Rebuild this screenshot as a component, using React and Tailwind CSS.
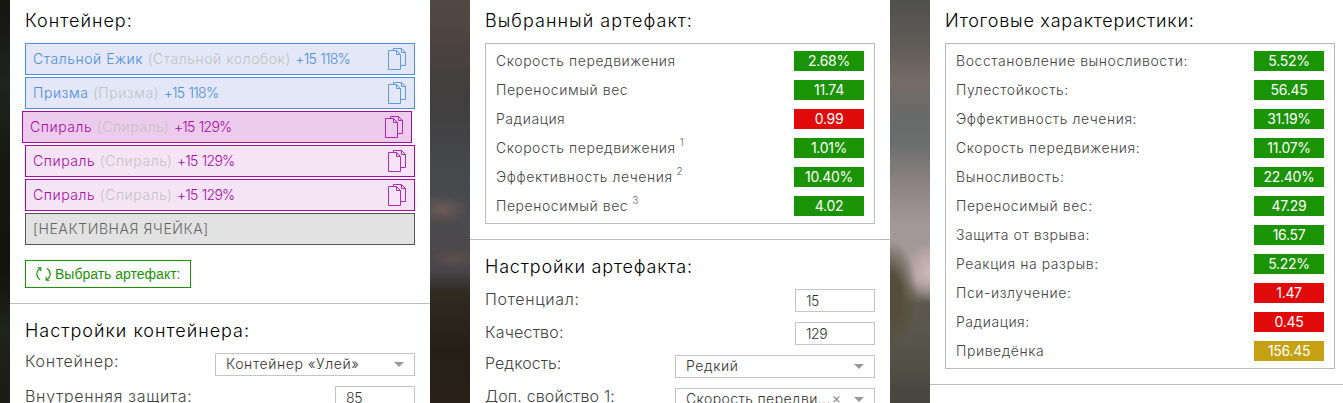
import React from "react"

const SLOTS = [
  { name: "Стальной Ежик", base: "(Стальной колобок)", stats: "+15 118%", kind: "blue" },
  { name: "Призма", base: "(Призма)", stats: "+15 118%", kind: "blue" },
  { name: "Спираль", base: "(Спираль)", stats: "+15 129%", kind: "purple", selected: true },
  { name: "Спираль", base: "(Спираль)", stats: "+15 129%", kind: "purple" },
  { name: "Спираль", base: "(Спираль)", stats: "+15 129%", kind: "purple" },
]

const ARTIFACT_STATS = [
  { label: "Скорость передвижения", value: "2.68%", tone: "good" },
  { label: "Переносимый вес", value: "11.74", tone: "good" },
  { label: "Радиация", value: "0.99", tone: "bad" },
  { label: "Скорость передвижения", note: "1", value: "1.01%", tone: "good" },
  { label: "Эффективность лечения", note: "2", value: "10.40%", tone: "good" },
  { label: "Переносимый вес", note: "3", value: "4.02", tone: "good" },
]

const TOTAL_STATS = [
  { label: "Восстановление выносливости:", value: "5.52%", tone: "good" },
  { label: "Пулестойкость:", value: "56.45", tone: "good" },
  { label: "Эффективность лечения:", value: "31.19%", tone: "good" },
  { label: "Скорость передвижения:", value: "11.07%", tone: "good" },
  { label: "Выносливость:", value: "22.40%", tone: "good" },
  { label: "Переносимый вес:", value: "47.29", tone: "good" },
  { label: "Защита от взрыва:", value: "16.57", tone: "good" },
  { label: "Реакция на разрыв:", value: "5.22%", tone: "good" },
  { label: "Пси-излучение:", value: "1.47", tone: "bad" },
  { label: "Радиация:", value: "0.45", tone: "bad" },
  { label: "Приведёнка", value: "156.45", tone: "total" },
]

const TONES = {
  good: "bg-[#1a9305]",
  bad: "bg-[#e00a0a]",
  total: "bg-[#c4a012]",
}

function CopyIcon() {
  return (
    <svg className="h-[22px] w-[18px] shrink-0 opacity-85" viewBox="0 0 18 22" fill="none" stroke="currentColor">
      <path d="M.5 2.5h8l4 4v15H.5z M8.5 2.5v4h4" />
      <path d="M5.5 2.500V.5h8l4 4v13h-5 M13.5 .5v4h4" />
    </svg>
  )
}

function RefreshIcon() {
  return (
    <svg className="w-[15px] h-[14px] shrink-0" viewBox="0 0 15 14" fill="none" stroke="currentColor" strokeWidth="1.1">
      <path d="M4.500 1.300C-.3 4-.3 9.500 4 12.800 M1.500 .8h3.300v3.400" />
      <path d="M10.500 12.700C15.300 10 15.300 4.500 11 1.200 M13.500 13.200h-3.300V9.800" />
    </svg>
  )
}

function Slot({ slot }) {
  const color = slot.kind === "blue" ? "border-[#4a90e2] text-[#4a8fe0]" : "border-[#a80aa8] text-[#a80aa8]"
  const fill = slot.kind === "blue" ? "bg-[#e3e7f7]" : slot.selected ? "bg-[#edcbec]" : "bg-[#f5e4f6]"

  return (
    <div
      className={`flex h-8 items-center justify-between border pl-[7px] pr-2 text-[14px] ${color} ${fill} ${
        slot.selected ? "-ml-[3px] mr-[3px]" : ""
      }`}
    >
      <span className="whitespace-nowrap pb-0.5 font-[350] tracking-[0.55px]">
        {slot.name} <span className="text-[#c3c3c3]">{slot.base}</span>{" "}
        <span className="tracking-[-0.75px] [word-spacing:1px]">{slot.stats}</span>
      </span>
      <CopyIcon />
    </div>
  )
}

function StatRow({ stat }) {
  return (
    <div className="flex h-5 items-center justify-between">
      <span className="whitespace-nowrap text-[14px] font-light leading-5 tracking-[0.56px] text-[#444]">
        {stat.label}
        {stat.note && <sup className="-top-[7px] ml-1 text-[10px] leading-none text-[#666]">{stat.note}</sup>}
      </span>
      <span
        className={`h-5 w-[70px] text-center text-[14px] font-normal leading-5 tracking-[-0.3px] text-white ${TONES[stat.tone]}`}
      >
        {stat.value}
      </span>
    </div>
  )
}

function StatBox({ stats }) {
  return (
    <div className="flex flex-col gap-[9px] border border-[#bbb] px-2.5 py-[7px]">
      {stats.map((stat, i) => (
        <StatRow key={i} stat={stat} />
      ))}
    </div>
  )
}

function Title({ tracking = "tracking-[1px]", children }) {
  return (
    <h2 className={`h-[22px] whitespace-nowrap text-[18px] font-[350] leading-[22px] text-black ${tracking}`}>
      {children}
    </h2>
  )
}

function Field({ label, labelClass = "leading-5 tracking-[0.7px]", children }) {
  return (
    <div className="flex h-[23px] items-start justify-between">
      <label className={`whitespace-nowrap text-[16px] font-light text-[#444] ${labelClass}`}>{label}</label>
      {children}
    </div>
  )
}

function NumberBox({ value }) {
  return (
    <div className="h-[23px] w-20 border border-[#c4c4c4] pl-2.5 text-[14px] font-[350] leading-[21px] tracking-[-0.4px] text-[#333]">
      {value}
    </div>
  )
}

function SelectBox({ value, clearable }) {
  return (
    <div className="flex h-[23px] w-[200px] items-center border border-[#c4c4c4] pl-2.5 pr-[10px] text-[14px] leading-5 text-[#333]">
      <span
        className={`min-w-0 grow whitespace-nowrap pb-px font-[350] ${
          clearable ? "tracking-[0.4px]" : "tracking-[0.6px]"
        }`}
      >
        {value}
      </span>
      {clearable && <span className="mr-[13px] shrink-0 pb-[3px] text-[14px] text-[#888]">×</span>}
      <span className="shrink-0 border-x-[5px] border-t-[5px] border-x-transparent border-t-[#999]" />
    </div>
  )
}

export default function App() {
  return (
    <div className="grid h-[403px] w-[1343px] grid-cols-[10px_420px_40px_420px_40px_413px] overflow-hidden bg-[#1b1b17] font-[Inter,sans-serif]">
      <div className="bg-[linear-gradient(#151512,#20231f_20%,#171814_40%,#12120e_65%,#20221e_80%,#1b1b17)]" />

      {/* Container */}
      <section className="bg-white">
        <div className="h-[304px] border-b border-[#bbb] px-[15px] pt-[10px]">
          <Title>Контейнер:</Title>
          <div className="mt-[11px] flex flex-col gap-0.5">
            {SLOTS.map((slot, i) => (
              <Slot key={i} slot={slot} />
            ))}
            <div className="flex h-8 items-center border border-[#555] bg-[#e2e2e2] pb-px pl-[7px] text-[14px] font-[350] tracking-[0.6px] text-[#666]">
              [НЕАКТИВНАЯ ЯЧЕЙКА]
            </div>
          </div>
          <button className="mt-[15px] flex h-7 w-[166px] items-center gap-1 border border-[#1a9305] pl-[10px] font-['Liberation_Sans',sans-serif] text-[14px] text-[#1a9305]">
            <RefreshIcon />
            <span className="whitespace-nowrap">Выбрать артефакт:</span>
          </button>
        </div>
        <div className="flex flex-col gap-2.5 px-[15px] pt-4">
          <div className="pb-px">
            <Title>Настройки контейнера:</Title>
          </div>
          <Field label="Контейнер:" labelClass="leading-4 tracking-[0.75px]">
            <SelectBox value="Контейнер «Улей»" />
          </Field>
          <Field label="Внутренняя защита:" labelClass="leading-5 tracking-[0.7px]">
            <NumberBox value="85" />
          </Field>
        </div>
      </section>

      {/* Backdrop between the columns: evening clouds over a dark treeline */}
      <div className="bg-[radial-gradient(ellipse_26px_14px_at_30%_51%,#6d5a54,transparent),radial-gradient(ellipse_24px_10px_at_60%_63%,#5f504c,transparent),linear-gradient(#544845,#4a4240_12%,#403e3e_24%,#454649_38%,#4a4b4f_50%,#4c494b_60%,#474549_66%,#2f2a22_71%,#251f18_85%,#292118)]" />

      {/* Selected artifact */}
      <section className="bg-white">
        <div className="h-[240px] border-b border-[#bbb] px-[15px] pt-[10px]">
          <Title tracking="tracking-[1.05px]">Выбранный артефакт:</Title>
          <div className="mt-[11px]">
            <StatBox stats={ARTIFACT_STATS} />
          </div>
        </div>
        <div className="flex flex-col gap-2.5 px-[15px] pt-4">
          <div className="pb-px">
            <Title tracking="tracking-[0.82px]">Настройки артефакта:</Title>
          </div>
          <Field label="Потенциал:">
            <NumberBox value="15" />
          </Field>
          <Field label="Качество:" labelClass="leading-5 tracking-[0.2px]">
            <NumberBox value="129" />
          </Field>
          <Field label="Редкость:" labelClass="leading-4 tracking-[0.05px]">
            <SelectBox value="Редкий" />
          </Field>
          <Field label="Доп. свойство 1:" labelClass="leading-4 tracking-[0.15px]">
            <SelectBox value="Скорость передви..." clearable />
          </Field>
        </div>
      </section>

      <div className="bg-[radial-gradient(ellipse_28px_56px_at_0%_72%,#564e3c_40%,transparent),radial-gradient(ellipse_26px_30px_at_100%_66%,#d0bab6,transparent),linear-gradient(#4f504b,#625d5a_12%,#766b68_20%,#686a6a_28%,#6c6e6e_35%,#8d8382_45%,#a39998_55%,#a2989a_68%,#5d584d_74%,#57554b_84%,#43423a)]" />

      {/* Totals */}
      <section className="bg-white">
        <div className="h-[385px] border-b border-[#bbb] pl-[15px] pr-2 pt-[10px]">
          <Title tracking="tracking-[0.75px]">Итоговые характеристики:</Title>
          <div className="mt-[11px]">
            <StatBox stats={TOTAL_STATS} />
          </div>
        </div>
      </section>
    </div>
  )
}
